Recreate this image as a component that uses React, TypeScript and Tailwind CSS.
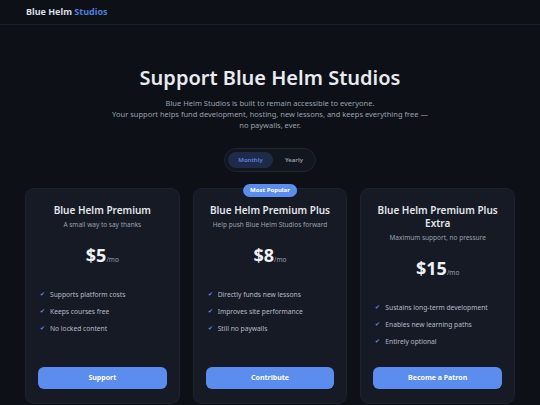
import { useState } from 'react';

const plans = [
  {
    name: 'Blue Helm Premium',
    tagline: 'A small way to say thanks',
    price: 5,
    features: ['Supports platform costs', 'Keeps courses free', 'No locked content'],
    cta: 'Support',
  },
  {
    name: 'Blue Helm Premium Plus',
    tagline: 'Help push Blue Helm Studios forward',
    price: 8,
    features: ['Directly funds new lessons', 'Improves site performance', 'Still no paywalls'],
    cta: 'Contribute',
    popular: true,
  },
  {
    name: 'Blue Helm Premium Plus Extra',
    tagline: 'Maximum support, no pressure',
    price: 15,
    features: ['Sustains long-term development', 'Enables new learning paths', 'Entirely optional'],
    cta: 'Become a Patron',
  },
];

export default function App() {
  const [billing, setBilling] = useState<'monthly' | 'yearly'>('monthly');

  return (
    <div
      className="min-h-[405px] w-full bg-[#0d1016] text-[#e6e9ef]"
      style={{ fontFamily: '"Noto Sans", "Open Sans", sans-serif' }}
    >
      {/* Header */}
      <header className="h-[25px] flex items-center px-[26px] border-b border-[#1a1f29]">
        <span className="text-[9px] font-bold text-[#d9dde5]">
          Blue Helm <span className="text-[#4f7fdc]">Studios</span>
        </span>
      </header>

      {/* Hero */}
      <section className="flex flex-col items-center pt-[41px]">
        <h1 className="text-[20px] leading-[24px] font-semibold text-[#e8eaef]">
          Support Blue Helm Studios
        </h1>
        <p className="mt-[8px] text-[7.5px] leading-[11px] text-[#9aa1ae] text-center">
          Blue Helm Studios is built to remain accessible to everyone.
          <br />
          Your support helps fund development, hosting, new lessons, and keeps everything free —
          <br />
          no paywalls, ever.
        </p>

        {/* Billing toggle */}
        <div className="mt-[17px] flex items-center gap-[3px] p-[3px] rounded-full bg-[#12161e] border border-[#1e2430]">
          <button
            onClick={() => setBilling('monthly')}
            className={`h-[16px] w-[45px] rounded-full text-[6px] font-semibold ${
              billing === 'monthly' ? 'bg-[#1d2a48] text-[#5b86e0]' : 'text-[#9aa1ae]'
            }`}
          >
            Monthly
          </button>
          <button
            onClick={() => setBilling('yearly')}
            className={`h-[16px] w-[36px] rounded-full text-[6px] font-semibold ${
              billing === 'yearly' ? 'bg-[#1d2a48] text-[#5b86e0]' : 'text-[#9aa1ae]'
            }`}
          >
            Yearly
          </button>
        </div>
      </section>

      {/* Plans */}
      <div className="mt-[16px] mx-auto w-[490px] grid grid-cols-3 gap-[13px]">
        {plans.map((plan) => (
          <div
            key={plan.name}
            className="relative h-[216px] flex flex-col rounded-[9px] bg-[#151a24] border border-[#1d2330] px-[12px] pt-[15px] pb-[14px]"
          >
            {plan.popular && (
              <span className="absolute top-[-5px] left-1/2 -translate-x-1/2 h-[13px] px-[7px] flex items-center rounded-full bg-[#5b8def] text-white text-[6px] font-bold whitespace-nowrap">
                Most Popular
              </span>
            )}
            <h2 className="text-center text-[10px] leading-[13px] font-semibold text-[#e3e6ec]">
              {plan.name}
            </h2>
            <p className="mt-[3px] text-center text-[6.5px] leading-[10px] text-[#9aa1ae]">
              {plan.tagline}
            </p>
            <div className="mt-[13px] flex items-baseline justify-center">
              <span className="text-[18px] leading-[24px] font-bold text-[#eef0f4]">${plan.price}</span>
              <span className="text-[6.5px] text-[#9aa1ae]">/mo</span>
            </div>
            <ul className="mt-[22px] flex flex-col gap-[6px] px-[2px]">
              {plan.features.map((f) => (
                <li key={f} className="flex items-center gap-[5px] text-[6.7px] leading-[11px] text-[#b6bcc8]">
                  <span className="text-[6px] text-[#5b8def]">✔</span>
                  {f}
                </li>
              ))}
            </ul>
            <button className="mt-auto h-[22px] w-full rounded-[6px] bg-[#5b8def] text-white text-[7px] font-bold">
              {plan.cta}
            </button>
          </div>
        ))}
      </div>
    </div>
  );
}
